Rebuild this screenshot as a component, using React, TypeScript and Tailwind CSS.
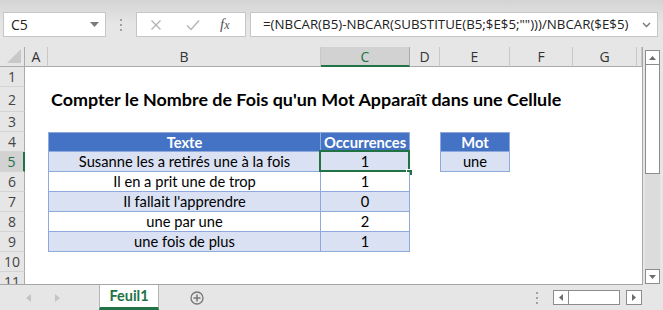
import React from "react";

const COLS: { k: string; w: number }[] = [
  { k: "A", w: 23 },
  { k: "B", w: 273 },
  { k: "C", w: 89 },
  { k: "D", w: 30 },
  { k: "E", w: 70 },
  { k: "F", w: 63 },
  { k: "G", w: 64 },
  { k: "", w: 5 },
];

const ui = { fontFamily: '"Open Sans", "Noto Sans", sans-serif' };
const cal = { fontFamily: 'Lato, "Liberation Sans", sans-serif' };

const rows = [
  { t: "Susanne les a retirés une à la fois", n: "1", band: true },
  { t: "Il en a prit une de trop", n: "1", band: false },
  { t: "Il fallait l'apprendre", n: "0", band: true },
  { t: "une par une", n: "2", band: false },
  { t: "une fois de plus", n: "1", band: true },
];

function RowHead({ n, h, sel }: { n: number; h: number; sel?: boolean }) {
  return (
    <div
      className={`w-[25px] shrink-0 flex items-center justify-center border-b border-[#d4d4d4] text-[14px] ${
        sel ? "bg-[#d2d2d2] text-[#217346] border-r-2 border-r-[#217346]" : "bg-[#e6e6e6] text-[#444] border-r border-r-[#ababab]"
      }`}
      style={{ height: h, ...ui }}
    >
      {n}
    </div>
  );
}

function Blank({ w }: { w: number }) {
  return <div className="shrink-0 h-full" style={{ width: w }} />;
}

export default function App() {
  return (
    <div className="w-[663px] h-[310px] overflow-hidden bg-[#e6e6e6] flex flex-col select-none">
      {/* Top formula bar */}
      <div className="h-[47px] shrink-0 bg-gradient-to-b from-[#d4d4d4] via-[#e6e6e6] to-[#e6e6e6] pt-[12px] pl-[3px] pr-[5px]">
        <div className="flex h-[25px] items-stretch">
          <div className="w-[103px] bg-white border border-[#c6c6c6] flex items-center pl-[7px] pr-[6px] text-[14px] text-[#222]" style={ui}>
            <span className="flex-1">C5</span>
            <svg width="9" height="6" viewBox="0 0 9 6">
              <path d="M0 0 L9 0 L4.5 5 Z" fill="#7a7a7a" />
            </svg>
          </div>
          <div className="w-[30px] flex flex-col items-center justify-center gap-[3px]">
            <div className="w-[2px] h-[2px] bg-[#a0a0a0]" />
            <div className="w-[2px] h-[2px] bg-[#a0a0a0]" />
            <div className="w-[2px] h-[2px] bg-[#a0a0a0]" />
          </div>
          <div className="w-[110px] bg-white border border-[#c6c6c6] flex items-center">
            <svg width="12" height="12" viewBox="0 0 12 12" className="ml-[13px]">
              <path d="M1.5 1.5 L10.5 10.5 M10.5 1.5 L1.5 10.5" stroke="#b4b4b4" strokeWidth="1.4" />
            </svg>
            <svg width="14" height="12" viewBox="0 0 14 12" className="ml-[24px]">
              <path d="M1 6.5 L5 10.5 L13 1.5" stroke="#b4b4b4" strokeWidth="1.4" fill="none" />
            </svg>
            <span className="ml-[20px] text-[15px] italic text-[#555]" style={{ fontFamily: '"Liberation Serif", serif' }}>
              f<span className="text-[12px]">x</span>
            </span>
          </div>
          <div className="w-[4px]" />
          <div className="flex-1 bg-white border border-[#c6c6c6] flex items-center pl-[12px] pr-[6px] text-[13.3px] text-[#222] whitespace-nowrap" style={ui}>
            <span className="flex-1">=(NBCAR(B5)-NBCAR(SUBSTITUE(B5;$E$5;"")))/NBCAR($E$5)</span>
            <svg width="9" height="6" viewBox="0 0 9 6" className="shrink-0">
              <path d="M1 1 L4.5 4.5 L8 1" stroke="#777" strokeWidth="1.4" fill="none" />
            </svg>
          </div>
        </div>
      </div>

      {/* Sheet area */}
      <div className="h-[238px] shrink-0 flex">
        <div className="w-[643px] shrink-0 flex flex-col overflow-hidden bg-white border-r border-b border-[#a6a6a6]">
          {/* Column headers */}
          <div className="h-[20px] shrink-0 flex bg-[#e6e6e6]">
            <div className="w-[25px] shrink-0 border-r border-b border-[#ababab] relative">
              <svg width="14" height="14" viewBox="0 0 14 14" className="absolute right-[3px] bottom-[3px]">
                <path d="M14 0 L14 14 L0 14 Z" fill="#c8c8c8" />
              </svg>
            </div>
            {COLS.map((c) => (
              <div
                key={c.k + c.w}
                className={`shrink-0 flex items-center justify-center text-[14px] ${
                  c.k === "C"
                    ? "bg-[#d2d2d2] text-[#217346] border-b-2 border-b-[#217346] border-r border-r-[#ababab]"
                    : "text-[#333] border-b border-b-[#ababab] border-r border-r-[#c8c8c8]"
                }`}
                style={{ width: c.w, ...ui }}
              >
                {c.k}
              </div>
            ))}
          </div>

          {/* Row 1 */}
          <div className="h-[20px] shrink-0 flex">
            <RowHead n={1} h={20} />
          </div>
          {/* Row 2 title */}
          <div className="h-[25px] shrink-0 flex">
            <RowHead n={2} h={25} />
            <Blank w={23} />
            <div className="flex items-center pl-[3px] whitespace-nowrap text-[17.9px] font-bold text-black" style={cal}>
              Compter le Nombre de Fois qu'un Mot Apparaît dans une Cellule
            </div>
          </div>
          {/* Row 3 */}
          <div className="h-[20px] shrink-0 flex">
            <RowHead n={3} h={20} />
          </div>
          {/* Row 4 header of table */}
          <div className="h-[20px] shrink-0 flex">
            <RowHead n={4} h={20} />
            <Blank w={23} />
            <div className="w-[273px] shrink-0 h-full bg-[#4472c4] border border-[#8ea9db] flex items-center justify-center text-white font-bold text-[14.7px]" style={cal}>
              Texte
            </div>
            <div className="w-[89px] shrink-0 h-full bg-[#4472c4] border-y border-r border-[#8ea9db] flex items-center justify-center text-white font-bold text-[14.7px]" style={cal}>
              Occurrences
            </div>
            <Blank w={30} />
            <div className="w-[70px] shrink-0 h-full bg-[#4472c4] border border-[#8ea9db] flex items-center justify-center text-white font-bold text-[14.7px]" style={cal}>
              Mot
            </div>
          </div>
          {/* Data rows */}
          {rows.map((r, i) => (
            <div key={i} className="h-[20px] shrink-0 flex">
              <RowHead n={5 + i} h={20} sel={i === 0} />
              <Blank w={23} />
              <div
                className={`w-[273px] shrink-0 h-full border-x border-b border-[#8ea9db] flex items-center justify-center text-black text-[14.7px] ${r.band ? "bg-[#d9e1f2]" : "bg-white"}`}
                style={cal}
              >
                {r.t}
              </div>
              <div
                className={`relative w-[89px] shrink-0 h-full border-r border-b border-[#8ea9db] flex items-center justify-center text-black text-[14.7px] ${r.band ? "bg-[#d9e1f2]" : "bg-white"}`}
                style={cal}
              >
                {r.n}
                {i === 0 && (
                  <>
                    <div className="absolute left-[-2px] top-[-2px] w-[91px] h-[22px] border-2 border-[#217346]" />
                    <div className="absolute right-[-3px] bottom-[-4px] w-[5px] h-[5px] bg-[#217346] outline outline-1 outline-white" />
                  </>
                )}
              </div>
              <Blank w={30} />
              {i === 0 && (
                <div className="w-[70px] shrink-0 h-full bg-[#d9e1f2] border-x border-b border-[#8ea9db] flex items-center justify-center text-black text-[14.7px]" style={cal}>
                  une
                </div>
              )}
            </div>
          ))}
          {/* Rows 10, 11 */}
          <div className="h-[20px] shrink-0 flex">
            <RowHead n={10} h={20} />
          </div>
          <div className="h-[20px] shrink-0 flex">
            <RowHead n={11} h={20} />
          </div>
        </div>

        {/* Vertical scrollbar */}
        <div className="flex-1 flex flex-col pl-[2px] pr-[3px] pt-[3px] pb-[1px]">
          <div className="h-[15px] bg-white border border-[#8c8c8c] flex items-center justify-center">
            <svg width="7" height="4" viewBox="0 0 7 4"><path d="M0 4 L7 4 L3.5 0 Z" fill="#6d6d6d" /></svg>
          </div>
          <div className="flex-1 bg-[#dcdcdc] flex flex-col">
            <div className="h-[109px] bg-white border-x border-b border-[#8c8c8c]" />
          </div>
          <div className="h-[15px] bg-white border border-[#8c8c8c] flex items-center justify-center">
            <svg width="7" height="4" viewBox="0 0 7 4"><path d="M0 0 L7 0 L3.5 4 Z" fill="#6d6d6d" /></svg>
          </div>
        </div>
      </div>

      {/* Bottom tab bar */}
      <div className="flex-1 flex items-stretch">
        <div className="w-[99px] shrink-0 flex items-center">
          <svg width="5" height="8" viewBox="0 0 5 8" className="ml-[26px]"><path d="M5 0 L5 8 L0 4 Z" fill="#c4c4c4" /></svg>
          <svg width="5" height="8" viewBox="0 0 5 8" className="ml-[24px]"><path d="M0 0 L0 8 L5 4 Z" fill="#c4c4c4" /></svg>
        </div>
        <div className="w-[60px] shrink-0 bg-white border-x border-[#b4b4b4] border-b-[3px] border-b-[#217346] flex items-center justify-center text-[#217346] font-bold text-[14.5px]" style={cal}>
          Feuil1
        </div>
        <div className="w-[95px] shrink-0 flex items-center justify-center pr-[20px]">
          <svg width="14" height="14" viewBox="0 0 14 14">
            <circle cx="7" cy="7" r="6" stroke="#777" strokeWidth="1.3" fill="none" />
            <path d="M7 3.5 L7 10.5 M3.5 7 L10.5 7" stroke="#777" strokeWidth="1.5" />
          </svg>
        </div>
        <div className="flex-1 flex items-center justify-end pr-[21px]">
          <div className="flex flex-col gap-[3px] mr-[15px]">
            <div className="w-[2px] h-[2px] bg-[#a0a0a0]" />
            <div className="w-[2px] h-[2px] bg-[#a0a0a0]" />
            <div className="w-[2px] h-[2px] bg-[#a0a0a0]" />
          </div>
          <div className="w-[16px] h-[15px] bg-white border border-[#8c8c8c] flex items-center justify-center">
            <svg width="4" height="7" viewBox="0 0 4 7"><path d="M4 0 L4 7 L0 3.5 Z" fill="#6d6d6d" /></svg>
          </div>
          <div className="w-[51px] h-[15px] bg-white border-y border-r border-[#8c8c8c]" />
          <div className="w-[6px] h-[15px] bg-[#e6e6e6]" />
          <div className="w-[16px] h-[15px] bg-white border border-[#8c8c8c] flex items-center justify-center">
            <svg width="4" height="7" viewBox="0 0 4 7"><path d="M0 0 L0 7 L4 3.5 Z" fill="#6d6d6d" /></svg>
          </div>
        </div>
      </div>
    </div>
  );
}
